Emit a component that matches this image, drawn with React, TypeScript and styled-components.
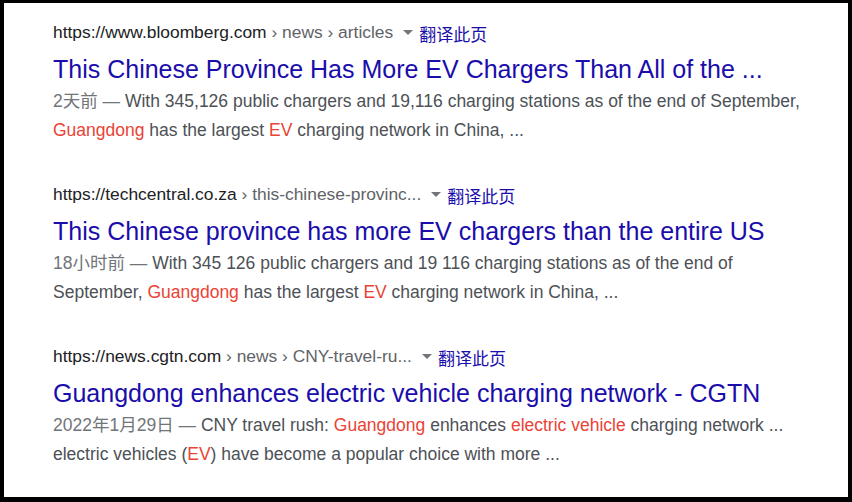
import React from 'react'
import styled, { createGlobalStyle } from 'styled-components'

const GlobalStyle = createGlobalStyle`
  html, body {
    margin: 0;
    padding: 0;
    background: #000;
  }
  body {
    font-family: 'Liberation Sans', Arial, 'Noto Sans CJK SC', sans-serif;
  }
`

const Frame = styled.div`
  box-sizing: border-box;
  width: 852px;
  height: 502px;
  background: #fff;
  border: solid #000;
  border-width: 3px 4px 5px 4px;
  padding: 17px 0 0 49px;
  overflow: hidden;
`

const Result = styled.div`
  margin-bottom: 37px;
`

const UrlRow = styled.div`
  display: flex;
  align-items: center;
  height: 24px;
  font-size: 17.4px;
  color: #202124;
  white-space: pre;
`

const Crumbs = styled.span`
  color: #5f6368;
`

const Caret = styled.span`
  display: inline-block;
  width: 0;
  height: 0;
  margin: 0 6px 0 10px;
  border-left: 5px solid transparent;
  border-right: 5px solid transparent;
  border-top: 5px solid #70757a;
`

const Translate = styled.a`
  color: #1a0dab;
  font-size: 17px;
  text-decoration: none;
  font-family: 'Noto Sans CJK SC', sans-serif;
  margin-top: 3px;
`

const Title = styled.a`
  display: block;
  margin-top: 9px;
  font-size: 25px;
  line-height: 32px;
  color: #1a0dab;
  text-decoration: none;
  white-space: nowrap;
`

const Snippet = styled.div`
  width: 758px;
  margin-top: 2px;
  font-size: 17.5px;
  line-height: 29px;
  color: #4d5156;
`

const Date = styled.span`
  color: #70757a;
`

const Hl = styled.span`
  color: #ea4335;
`

type Item = {
  domain: string
  crumbs: string
  title: string
  date: string
  body: React.ReactNode
}

const items: Item[] = [
  {
    domain: 'https://www.bloomberg.com',
    crumbs: ' › news › articles',
    title: 'This Chinese Province Has More EV Chargers Than All of the ...',
    date: '2天前',
    body: (
      <>
        With 345,126 public chargers and 19,116 charging stations as of the end of September,{' '}
        <Hl>Guangdong</Hl> has the largest <Hl>EV</Hl> charging network in China, ...
      </>
    ),
  },
  {
    domain: 'https://techcentral.co.za',
    crumbs: ' › this-chinese-provinc...',
    title: 'This Chinese province has more EV chargers than the entire US',
    date: '18小时前',
    body: (
      <>
        With 345 126 public chargers and 19 116 charging stations as of the end of September,{' '}
        <Hl>Guangdong</Hl> has the largest <Hl>EV</Hl> charging network in China, ...
      </>
    ),
  },
  {
    domain: 'https://news.cgtn.com',
    crumbs: ' › news › CNY-travel-ru...',
    title: 'Guangdong enhances electric vehicle charging network - CGTN',
    date: '2022年1月29日',
    body: (
      <>
        CNY travel rush: <Hl>Guangdong</Hl> enhances <Hl>electric vehicle</Hl> charging network ...{' '}
        electric vehicles (<Hl>EV</Hl>) have become a popular choice with more ...
      </>
    ),
  },
]

export default function App() {
  return (
    <>
      <GlobalStyle />
      <Frame>
        {items.map((it) => (
          <Result key={it.domain}>
            <UrlRow>
              <span>{it.domain}</span>
              <Crumbs>{it.crumbs}</Crumbs>
              <Caret />
              <Translate href="#">翻译此页</Translate>
            </UrlRow>
            <Title href="#">{it.title}</Title>
            <Snippet>
              <Date>{it.date} — </Date>
              {it.body}
            </Snippet>
          </Result>
        ))}
      </Frame>
    </>
  )
}
